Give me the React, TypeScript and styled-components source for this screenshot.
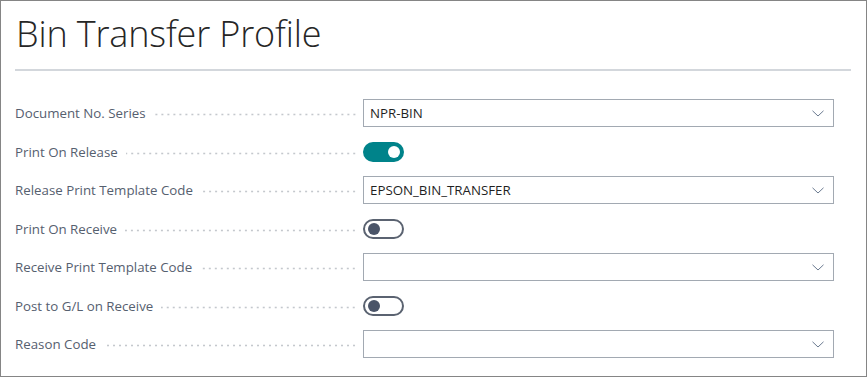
import styled, { createGlobalStyle } from 'styled-components';

type Field =
  | { label: string; kind: 'lookup'; value: string }
  | { label: string; kind: 'toggle'; on: boolean };

const fields: Field[] = [
  { label: 'Document No. Series', kind: 'lookup', value: 'NPR-BIN' },
  { label: 'Print On Release', kind: 'toggle', on: true },
  { label: 'Release Print Template Code', kind: 'lookup', value: 'EPSON_BIN_TRANSFER' },
  { label: 'Print On Receive', kind: 'toggle', on: false },
  { label: 'Receive Print Template Code', kind: 'lookup', value: '' },
  { label: 'Post to G/L on Receive', kind: 'toggle', on: false },
  { label: 'Reason Code', kind: 'lookup', value: '' },
];

const GlobalStyle = createGlobalStyle`
  html, body {
    margin: 0;
    padding: 0;
    background: #ffffff;
  }
  * {
    box-sizing: border-box;
  }
`;

const Chevron = () => (
  <svg width="12" height="7" viewBox="0 0 12 7">
    <polyline points="0.5,0.8 6,6 11.5,0.8" fill="none" stroke="#6b7a90" strokeWidth="1" />
  </svg>
);

const App = () => (
  <StyledPage>
    <GlobalStyle />
    <StyledHeader>
      <h1>Bin Transfer Profile</h1>
    </StyledHeader>
    <StyledForm>
      {fields.map((f) => (
        <StyledRow key={f.label}>
          <StyledCaption>
            <span>{f.label}</span>
            <StyledLeader />
          </StyledCaption>
          {f.kind === 'lookup' ? (
            <StyledLookup>
              <span>{f.value}</span>
              <Chevron />
            </StyledLookup>
          ) : (
            <StyledToggle $on={f.on}>
              <StyledKnob $on={f.on} />
            </StyledToggle>
          )}
        </StyledRow>
      ))}
    </StyledForm>
  </StyledPage>
);

const StyledPage = styled.div`
  width: 867px;
  height: 377px;
  border: 1px solid #858585;
  background: #ffffff;
  padding: 0 14px 0 14px;
  font-family: 'Open Sans', 'Noto Sans', sans-serif;
`;

const StyledHeader = styled.div`
  padding-top: 10px;
  height: 70px;
  border-bottom: 2px solid #d3d7dc;
  margin-right: 1px;

  h1 {
    margin: 0 0 0 1px;
    font-size: 36px;
    font-weight: 300;
    color: #262626;
    line-height: 46px;
    letter-spacing: -0.15px;
  }
`;

const StyledForm = styled.div`
  display: grid;
  grid-auto-rows: 28px;
  row-gap: 10.5px;
  padding-top: 28px;
`;

const StyledRow = styled.div`
  display: grid;
  grid-template-columns: 348px 471px;
  align-items: center;
`;

const StyledCaption = styled.div`
  display: flex;
  align-items: center;
  gap: 8px;
  padding-right: 6px;
  font-size: 13.3px;
  color: #56606f;
  white-space: nowrap;
`;

const StyledLeader = styled.div`
  flex: 1;
  height: 3px;
  margin-top: 3px;
  background-image: radial-gradient(circle, #c4c8cd 0.9px, transparent 1.2px);
  background-size: 6px 3px;
  background-position: right center;
`;

const StyledLookup = styled.div`
  height: 28px;
  display: flex;
  align-items: center;
  justify-content: space-between;
  padding: 0 9px 0 6px;
  border: 1px solid #a2a9b2;
  font-size: 13.3px;
  color: #1f1f1f;
`;

const StyledToggle = styled.div<{ $on: boolean }>`
  width: 41px;
  height: 20px;
  border-radius: 10px;
  display: flex;
  align-items: center;
  justify-content: ${(p) => (p.$on ? 'flex-end' : 'flex-start')};
  padding: 0 4px;
  background: ${(p) => (p.$on ? '#00838a' : '#ffffff')};
  border: ${(p) => (p.$on ? 'none' : '2px solid #5b6371')};
`;

const StyledKnob = styled.div<{ $on: boolean }>`
  width: 12px;
  height: 12px;
  border-radius: 50%;
  background: ${(p) => (p.$on ? '#ffffff' : '#4a5468')};
  margin: ${(p) => (p.$on ? '0' : '0 0 0 -1px')};
`;

export default App;
